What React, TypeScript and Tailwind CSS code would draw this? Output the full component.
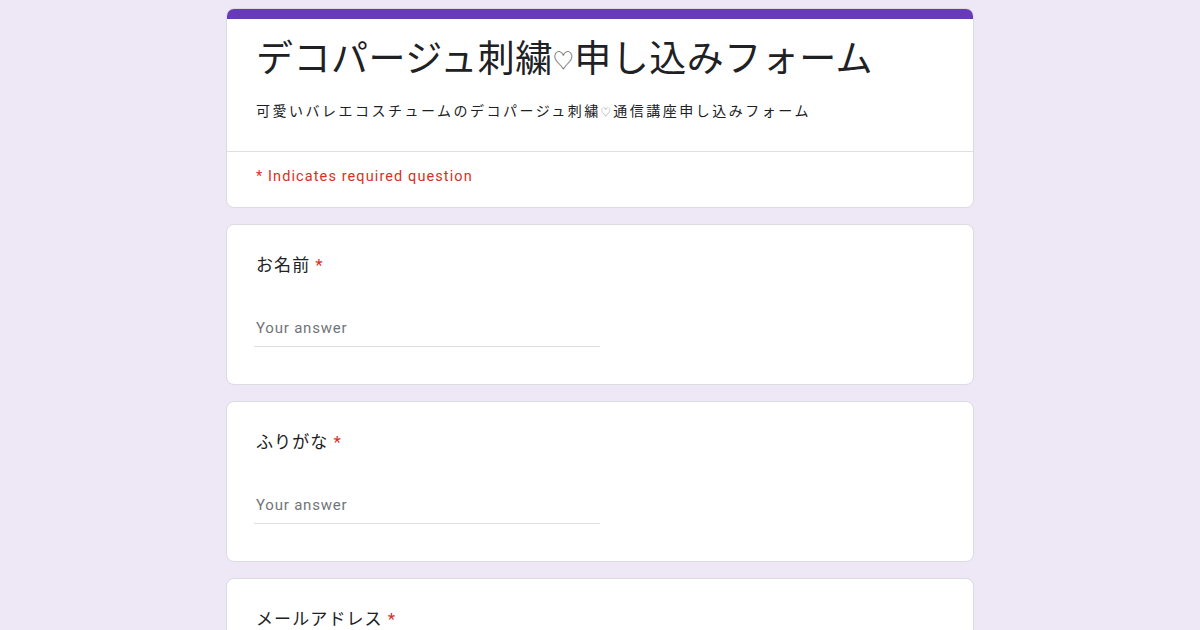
export default function App() {
  const questions = ["お名前", "ふりがな", "メールアドレス"]

  return (
    <div className="h-[630px] overflow-hidden bg-[#ede7f6] font-['Roboto','Noto_Sans_CJK_JP',sans-serif]">
      <div className="mx-auto w-[748px] pt-2 flex flex-col gap-4">
        {/* header card */}
        <div className="rounded-lg overflow-hidden bg-white border border-[#dadce0]">
          <div className="h-[11px] bg-[#673ab7] -mx-px -mt-px"></div>
          <div className="px-[29px] pt-[17px] pb-[28px] border-b border-[#e0e0e0]">
            <h1 className="text-[37px] leading-[48px] text-[#202124] tracking-[0.5px]">
              デコパージュ刺繍<span className="text-[21px] text-[#666] align-[4px]">♡</span>申し込みフォーム
            </h1>
            <p className="mt-[16px] text-[14px] leading-[20px] text-[#202124] tracking-[2.5px]">
              可愛いバレエコスチュームのデコパージュ刺繍<span className="text-[10px] text-[#888]">♡</span>通信講座申し込みフォーム
            </p>
          </div>
          <div className="px-[29px] pt-[15px] pb-[20px]">
            <p className="text-[14.5px] leading-[20px] text-[#d93025] tracking-[1.1px]">
              * Indicates required question
            </p>
          </div>
        </div>

        {questions.map((q) => (
          <div key={q} className="rounded-lg bg-white border border-[#dadce0] px-[29px] pt-[28px] pb-[37px]">
            <div className="text-[17px] leading-[24px] text-[#202124] tracking-[1.1px]">
              {q}
              <span className="text-[#d93025] ml-[5px]">*</span>
            </div>
            <div className="mt-[39px] w-[346px] -ml-[2px] border-b border-[#e0e0e0] pb-[6px] pl-[2px]">
              <span className="text-[15px] leading-[20px] text-[#70757a] tracking-[0.8px]">Your answer</span>
            </div>
          </div>
        ))}
      </div>
    </div>
  )
}
